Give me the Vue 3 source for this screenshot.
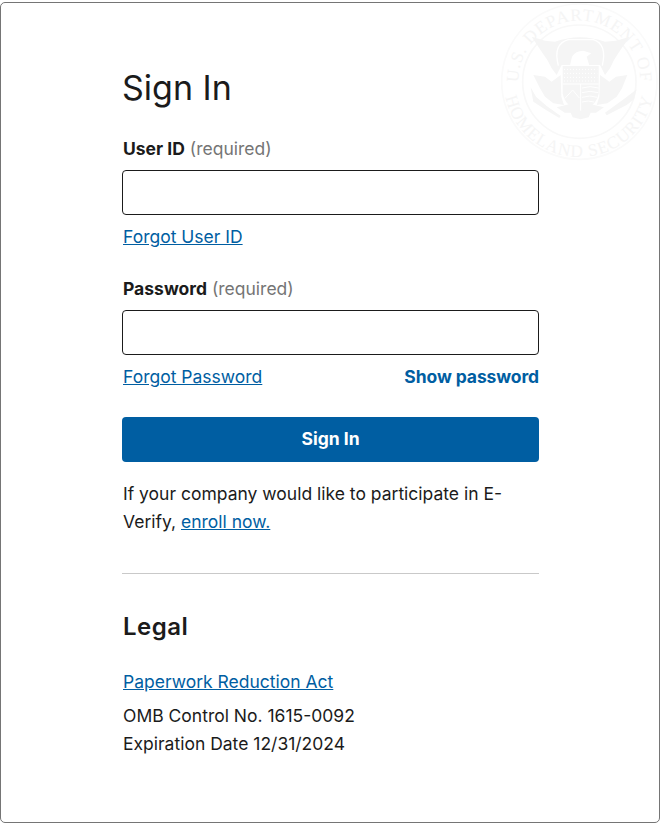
<template>
  <div class="page">
    <svg class="seal" viewBox="0 0 513 540" aria-hidden="true">
      <defs>
        <path id="sealTop" d="M 85 245 a 183 183 0 0 1 366 0" />
        <path id="sealBottom" d="M 42 245 a 226 226 0 0 0 452 0" />
      </defs>
      <circle cx="268" cy="245" r="233" fill="none" stroke="#fafafa" stroke-width="5" />
      <circle cx="268" cy="245" r="170" fill="none" stroke="#f8f8f8" stroke-width="5" />
      <text class="seal-text"><textPath href="#sealTop" startOffset="50%" text-anchor="middle">U.S. DEPARTMENT OF</textPath></text>
      <text class="seal-text"><textPath href="#sealBottom" startOffset="50%" text-anchor="middle">HOMELAND SECURITY</textPath></text>
      <g fill="#f5f5f5">
        <!-- upper wings and the dome round the head -->
        <path d="M125 110 L165 122 L195 125 Q270 98 345 125 L378 122 L420 110 L398 140 L385 160 L372 180 L360 205 L345 225 L330 195 L215 195 L200 225 L185 205 L172 180 L158 160 L145 140 Z" />
        <!-- lower wings -->
        <path d="M130 225 L165 230 L185 245 L212 225 L214 290 L222 315 L190 310 L165 290 L150 265 Z" />
        <path d="M412 225 L378 230 L358 245 L330 225 L328 290 L320 315 L352 310 L380 290 L396 265 Z" />
        <!-- tail -->
        <path d="M200 322 L240 312 L300 312 L342 322 L318 338 L302 338 L296 352 L272 358 L248 352 L242 338 L224 338 Z" />
        <!-- olive branch and arrows -->
        <path d="M122 262 L138 290 L170 318 L212 348 L208 354 L168 330 L130 305 Z" />
        <path d="M440 268 L405 295 L345 338 L350 346 L410 315 L432 298 Z" />
      </g>
      <path fill="none" stroke="#fff" stroke-width="4" d="M205 197 Q188 132 235 119 L310 119 Q352 132 337 197" />
      <path fill="#fff" d="M240 196 L246 170 Q256 152 280 152 L304 160 L290 170 L298 196 Z" />
      <path fill="#f5f5f5" d="M218 198 L326 198 L326 280 Q320 320 272 332 Q224 320 218 280 Z" />
      <g fill="none" stroke="#fff" stroke-width="3">
        <path d="M218 252 L326 252 M272 252 L272 332" />
        <path d="M222 208 L322 208 M222 220 L322 220 M222 232 L322 232 M222 243 L322 243" stroke-dasharray="3 6" />
        <path d="M276 264 Q300 256 326 264 M276 278 Q300 270 325 278 M276 292 Q300 284 322 292 M276 306 Q295 300 312 306" />
        <path d="M224 296 L248 270 L268 294" />
      </g>
    </svg>

    <main class="content">
      <h1>Sign In</h1>

      <form class="sign-in" @submit.prevent>
        <div class="field">
          <label for="userId"><b>User ID</b> <span class="hint">(required)</span></label>
          <input id="userId" v-model="userId" type="text" autocomplete="off">
          <div class="under-input">
            <a href="#">Forgot User ID</a>
          </div>
        </div>

        <div class="field">
          <label for="password"><b>Password</b> <span class="hint">(required)</span></label>
          <input id="password" v-model="password" :type="showPassword ? 'text' : 'password'">
          <div class="under-input">
            <a href="#">Forgot Password</a>
            <button type="button" class="show" @click="showPassword = !showPassword">Show password</button>
          </div>
        </div>

        <button class="submit">Sign In</button>
      </form>

      <p class="enroll">If your company would like to participate in E-Verify, <a href="#">enroll now.</a></p>

      <hr>

      <h2>Legal</h2>
      <a class="paperwork" href="#">Paperwork Reduction Act</a>
      <p class="omb">OMB Control No. 1615-0092<br>Expiration Date 12/31/2024</p>
    </main>
  </div>
</template>

<script setup>
import { ref } from 'vue';

const userId = ref('');
const password = ref('');
const showPassword = ref(false);
</script>

<style>
html, body {
  margin: 0;
  background: #fff;
}
</style>

<style scoped>
.page {
  position: relative;
  box-sizing: border-box;
  width: 660px;
  height: 821px;
  margin-top: 2px;
  border: 1px solid #757575;
  border-radius: 5px;
  overflow: hidden;
  font-family: Inter, "Open Sans", sans-serif;
  font-size: 17.5px;
  color: #1b1b1b;
}

.seal {
  position: absolute;
  left: 489px;
  top: -3px;
  width: 171px;
  height: 180px;
}

.seal-text {
  font-family: "Liberation Serif", serif;
  font-size: 52px;
  letter-spacing: 3px;
  fill: #f5f5f5;
}

.content {
  position: relative;
  width: 417px;
  padding-top: 62px;
  margin-left: 121px;
}

h1 {
  margin: 0 0 27px;
  font-family: Inter, sans-serif;
  font-size: 34px;
  line-height: 45px;
  font-weight: 400;
}

.field {
  margin-bottom: 28px;
}

label {
  display: block;
  padding-left: 1px;
  line-height: 24px;
  margin-bottom: 9px;
}

label b {
  font-weight: 700;
}

.hint {
  color: #757575;
}

input {
  display: block;
  box-sizing: border-box;
  width: 100%;
  height: 45px;
  border: 1px solid #1b1b1b;
  border-radius: 4px;
  outline: none;
  background: #fff;
}

.under-input {
  display: flex;
  justify-content: space-between;
  align-items: center;
  padding-left: 1px;
  margin-top: 10px;
  line-height: 24px;
}

a {
  color: #005ea2;
  text-decoration: underline;
}

.show {
  padding: 0;
  border: 0;
  background: none;
  font: inherit;
  font-weight: 700;
  letter-spacing: -0.1px;
  color: #005ea2;
}

.submit {
  display: block;
  width: 100%;
  height: 45px;
  padding: 0 0 2px;
  border: 0;
  border-radius: 4px;
  background: #005ea2;
  color: #fff;
  font: inherit;
  font-weight: 700;
}

.enroll {
  margin: 18px 0 0;
  padding-left: 1px;
  line-height: 28px;
}

hr {
  margin: 37px 0 0;
  border: 0;
  border-top: 1px solid #c9c9c9;
}

h2 {
  margin: 38px 0 0;
  padding-left: 1px;
  font-family: Inter, sans-serif;
  font-size: 24px;
  line-height: 30px;
  font-weight: 600;
  letter-spacing: 0.5px;
}

.paperwork {
  display: block;
  margin-top: 26px;
  padding-left: 1px;
  line-height: 28px;
}

.omb {
  margin: 6px 0 0;
  padding-left: 1px;
  line-height: 28px;
}
</style>
